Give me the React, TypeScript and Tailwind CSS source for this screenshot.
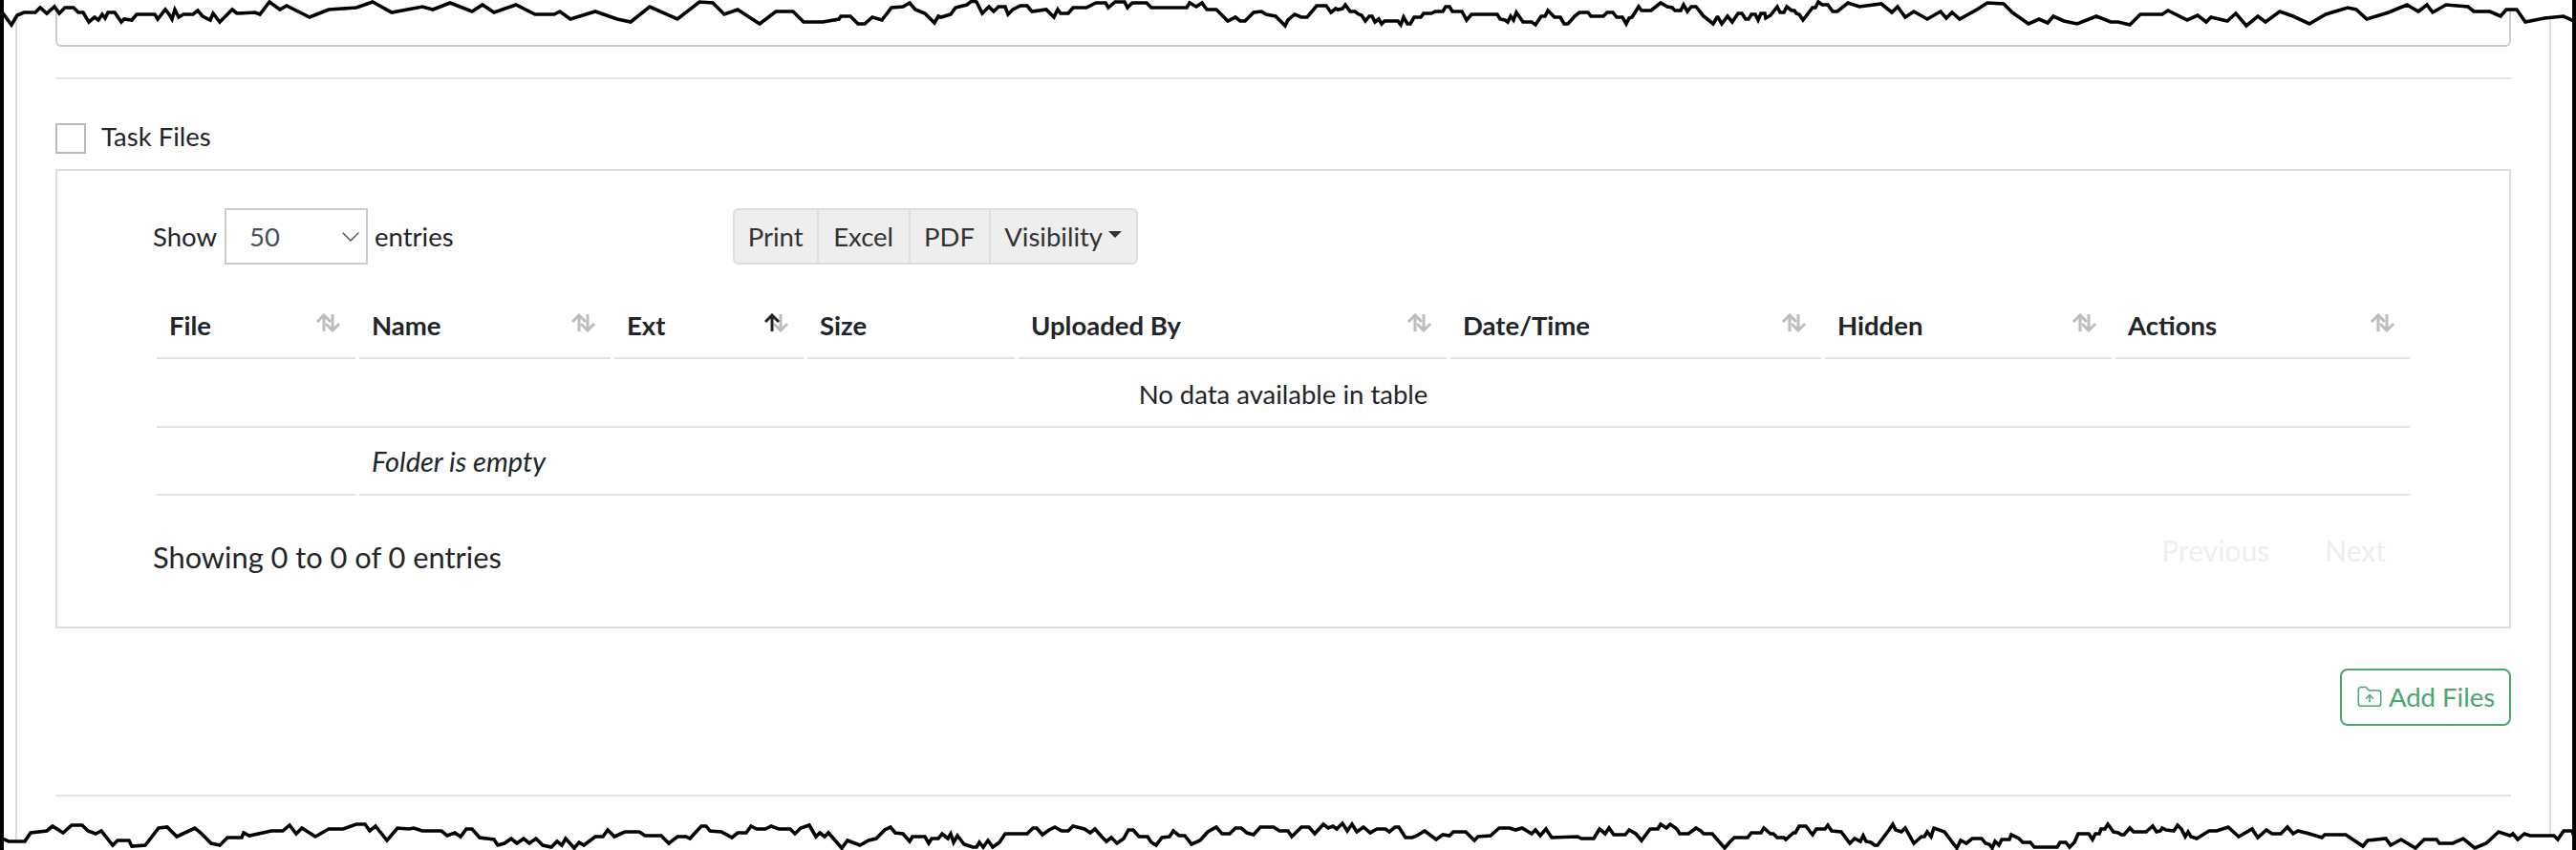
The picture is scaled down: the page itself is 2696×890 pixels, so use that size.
import { ChevronDown, FolderUp } from "lucide-react";

// torn edge of the screenshot, traced from the picture
const topEdge =
  "0,10 12,26 18,16 25,13 37,13 42,8 49,14 57,7 62,14 68,8 77,8 82,13 87,13 93,23 99,18 103,21 107,15 110,19 113,13 120,13 127,23 130,20 138,21 143,15 162,15 165,20 173,10 177,15 180,20 183,10 187,18 192,15 202,15 207,11 212,17 220,21 223,14 230,23 238,15 243,10 248,14 267,13 272,15 282,2 293,10 300,6 324,18 344,10 373,8 390,2 410,13 442,7 453,10 471,3 494,12 505,5 517,13 540,5 560,15 580,15 586,12 597,20 623,12 646,20 660,23 680,7 709,20 732,2 746,3 758,15 772,10 795,25 812,12 830,12 841,23 861,23 878,20 " +
  "880,17 890,17 898,25 905,25 913,18 923,21 933,8 945,7 952,3 958,10 968,14 978,24 982,17 985,18 995,15 1000,8 1012,5 1017,1 1022,2 1028,14 1035,7 1040,12 1045,7 1052,7 1055,15 1060,10 1068,6 1075,6 1080,12 1095,10 1103,18 1107,10 1110,14 1118,14 1123,8 1137,8 1147,3 1157,3 1160,8 1167,2 1177,2 1180,8 1185,3 1200,3 1205,8 1242,8 1245,3 1252,7 1258,3 1263,10 1273,10 1285,22 1293,18 1298,22 1303,22 1312,13 1320,12 1325,15 1335,17 1345,27 1348,21 1355,15 1362,18 1368,18 1378,6 1388,6 1393,13 1398,9 " +
  "1400,10 1405,9 1408,5 1413,12 1418,12 1422,15 1425,16 1429,22 1433,17 1436,17 1439,23 1443,20 1446,25 1449,22 1463,22 1466,26 1469,18 1473,25 1476,25 1480,18 1487,18 1490,14 1498,14 1502,12 1510,12 1513,7 1517,7 1520,12 1530,12 1535,21 1540,15 1567,15 1570,20 1575,21 1578,23 1581,17 1584,21 1587,13 1594,23 1603,23 1607,26 1613,17 1617,17 1620,11 1627,18 1633,18 1637,25 1641,25 1648,17 1653,13 1662,13 1665,17 1678,17 1682,13 1688,13 1692,18 1698,18 1702,25 1705,19 1708,18 1715,7 1718,11 1728,11 1738,3 1745,7 1750,8 1753,11 1759,11 1762,5 1766,12 1770,7 1775,7 1783,17 1793,25 1797,18 1798,18 1802,25 1808,17 1813,23 1819,14 1823,14 1827,20 1830,20 1833,15 1837,15 1840,21 1843,14 1847,14 1848,19 1853,16 1860,7 1863,13 1867,13 1870,7 1875,11 1878,11 1880,14 1883,15 1887,21 1897,8 1900,8 1903,2 1907,5 1913,5 1918,12 " +
  "1923,12 1934,3 1946,7 1969,4 1980,13 1986,7 1994,18 2003,12 2017,20 2031,12 2037,19 2043,13 2051,20 2069,10 2080,3 2097,4 2106,13 2123,25 2134,20 2143,24 2149,17 2160,22 2174,25 2194,17 2209,23 2217,23 2229,26 2240,15 2263,15 2269,11 2289,21 2300,16 2309,23 2314,18 2331,22 2340,14 2351,27 2363,17 2371,23 2386,12 2400,17 2417,25 2434,15 2457,8 2466,10 2477,20 2500,13 2519,5 2531,12 2540,5 2546,13 2560,5 2583,7 2589,12 2606,12 2617,17 2623,10 2634,10 2643,23 2663,19 2683,17 2696,23";

const bottomEdge =
  "0,877 9,881 26,881 32,872 49,870 55,865 66,872 75,864 86,864 92,870 100,873 106,870 118,885 123,880 135,880 138,886 152,885 166,867 175,866 185,876 204,867 210,872 221,883 230,885 238,877 253,877 255,872 261,875 284,870 296,870 303,864 310,873 316,867 330,876 344,868 359,868 373,863 382,863 387,870 393,865 405,880 416,867 428,868 433,867 442,870 462,870 468,875 476,872 482,876 488,868 494,868 502,877 517,879 521,885 528,883 535,878 541,883 548,878 554,883 561,878 568,885 577,887 583,881 588,885 592,878 601,888 606,882 611,885 623,876 631,876 636,869 643,876 654,871 669,871 675,875 692,875 700,883 709,876 718,876 722,878 734,865 739,865 743,870 755,871 766,877 772,872 781,872 786,865 792,868 801,868 807,865 815,868 827,868 832,873 838,867 847,864 854,876 858,872 863,876 867,872 881,888 887,880 " +
  "900,885 909,880 917,878 926,869 932,866 937,872 945,873 952,881 955,876 968,876 972,883 975,878 982,878 986,873 992,878 995,873 998,882 1002,875 1009,884 1018,887 1022,887 1025,882 1029,887 1034,880 1039,887 1046,882 1052,873 1075,873 1081,867 1085,867 1091,874 1098,869 1104,866 1111,870 1118,870 1123,865 1135,868 1141,872 1146,868 1153,876 1158,881 1163,877 1169,883 1176,878 1181,869 1186,869 1192,876 1201,876 1205,882 1210,885 1216,877 1224,876 1228,870 1234,875 1240,875 1247,884 1256,880 1264,871 1273,866 1279,873 1287,873 1293,867 1299,867 1305,872 1312,874 1319,866 1333,866 1339,870 1348,870 1352,876 1362,866 1370,866 1376,873 1385,863 1390,867 1395,865 1399,868 1405,862 1410,870 1415,863 1420,871 1427,866 1434,872 1441,868 1450,868 1454,871 1460,866 1464,866 1471,877 1478,877 1483,875 1491,870 1503,879 1510,874 1517,875 1521,871 1534,871 1543,880 1547,876 1560,875 1569,867 1580,867 1586,869 1593,867 1603,873 1607,869 1612,875 1618,868 1624,877 1651,876 1655,878 1668,878 1674,868 1680,873 1684,867 1689,874 1701,874 1705,869 1712,873 1718,880 1727,868 1735,868 1738,863 1744,867 1748,863 1755,868 1758,873 1767,873 1775,867 " +
  "1780,870 1783,873 1792,873 1805,888 1810,882 1815,877 1829,877 1833,872 1843,872 1846,867 1853,873 1856,873 1860,877 1867,877 1869,879 1877,872 1879,872 1883,865 1890,865 1897,874 1901,868 1910,868 1913,864 1917,870 1927,871 1936,883 1941,878 1947,881 1950,875 1953,881 1958,882 1962,885 1965,885 1977,869 1981,863 1984,869 1990,871 1994,867 2003,883 2011,876 2014,876 2017,871 2021,876 2024,867 2035,871 2048,888 2052,880 2058,883 2064,878 2074,878 2078,883 2082,884 2085,888 2088,881 2092,885 2095,879 2103,879 2105,874 2113,878 2117,882 2125,882 2129,887 2153,887 2156,882 2162,882 2166,887 2171,882 2175,873 2186,873 2190,879 2193,873 2197,873 2199,868 2203,868 2206,863 2212,871 2217,872 2220,874 2223,874 2229,867 2233,871 2246,871 2253,865 2257,871 2261,870 2263,867 2267,869 2275,870 2279,864 2283,868 2287,876 2290,871 2293,876 2299,878 " +
  "2312,870 2320,870 2332,866 2343,876 2357,868 2363,877 2372,869 2378,873 2387,873 2394,866 2400,873 2405,870 2417,873 2430,877 2433,874 2455,874 2473,886 2478,880 2497,878 2502,885 2513,879 2528,888 2537,879 2550,879 2553,883 2567,883 2578,878 2590,888 2602,883 2615,871 2627,875 2630,873 2635,879 2642,873 2648,875 2673,875 2677,879 2683,870 2692,870 2696,882";

const columns = [
  { label: "File", width: "w-[208px]" },
  { label: "Name", width: "w-[263px]" },
  { label: "Ext", width: "w-[198px]", active: true },
  { label: "Size", width: "w-[217px]", noSort: true },
  { label: "Uploaded By", width: "w-[448px]" },
  { label: "Date/Time", width: "w-[388px]" },
  { label: "Hidden", width: "w-[300px]" },
  { label: "Actions", width: "w-[308px]" },
];

function SortIcon({ active }: { active?: boolean }) {
  return (
    <svg width="26" height="20" viewBox="0 0 26 20" fill="none" strokeWidth="3" className="absolute right-[15px] top-[23px]">
      <path d="M17 1v17M10 11l7 7 7-7" stroke="#bdbdbd" />
      <path d="M8 19V2M1 9l7-7 7 7" stroke={active ? "#212529" : "#bdbdbd"} />
    </svg>
  );
}

function TornEdges() {
  return (
    <svg width="2696" height="890" viewBox="0 0 2696 890" className="absolute inset-0">
      <polygon points={`0,0 ${topEdge} 2696,0`} fill="#fff" />
      <polygon points={`0,890 ${bottomEdge} 2696,890`} fill="#fff" />
      <polyline points={topEdge} fill="none" stroke="#000" strokeWidth="3.6" />
      <polyline points={bottomEdge} fill="none" stroke="#000" strokeWidth="3.6" />
    </svg>
  );
}

export default function App() {
  return (
    <div className="relative h-[890px] w-[2696px] overflow-hidden border-l-[4px] border-r-[4px] border-black bg-white font-['Lato','Liberation_Sans',sans-serif] text-[27.5px] text-[#212529]">
      <div className="ml-[12px] h-full w-[2654px] border-x-2 border-[#dedede] px-[40px]">
        <div className="h-[49px] rounded-b-md border-x-2 border-b-2 border-[#cccccc]" />
        <div className="mt-[32px] h-[2px] bg-[#e4e4e4]" />

        <div className="mt-[46px] flex h-[31px] items-center gap-[16px]">
          <div className="h-[32px] w-[32px] border-2 border-[#b8bcc2]" />
          <span className="-mt-[4px]">Task Files</span>
        </div>

        <div className="mt-[17px] h-[481px] border-2 border-[#dedede] pl-[100px] pt-[39px]">
          <div className="flex h-[59px] items-center">
            <span>Show</span>
            <div className="ml-[8px] flex h-[59px] w-[150px] items-center justify-between border-2 border-[#cccccc] pl-[24px] text-[#495057]">
              50
              <ChevronDown size={32} strokeWidth={1} />
            </div>
            <span className="ml-[7px]">entries</span>
            <div className="ml-[292px] flex h-[59px] items-stretch rounded-md border-2 border-[#dddddd] bg-[#eeeeee] text-[#333333]">
              <div className="flex w-[88px] items-center justify-center border-r-2 border-[#dddddd]">Print</div>
              <div className="flex w-[96px] items-center justify-center border-r-2 border-[#dddddd]">Excel</div>
              <div className="flex w-[84px] items-center justify-center border-r-2 border-[#dddddd]">PDF</div>
              <div className="flex w-[152px] items-center justify-center gap-[6px]">
                Visibility
                <span className="mb-[4px] h-0 w-0 border-x-[7px] border-t-[7px] border-x-transparent border-t-[#333333]" />
              </div>
            </div>
          </div>

          <table className="mt-[28px] w-[2366px] table-fixed border-separate border-spacing-x-[4px] border-spacing-y-0">
            <thead>
              <tr>
                {columns.map((col) => (
                  <th key={col.label} className={`relative h-[71px] border-b-2 border-[#e2e2e2] pl-[13px] pt-[3px] text-left font-bold ${col.width}`}>
                    {col.label}
                    {!col.noSort && <SortIcon active={col.active} />}
                  </th>
                ))}
              </tr>
            </thead>
            <tbody>
              <tr>
                <td colSpan={8} className="h-[72px] border-b-2 border-[#e2e2e8] pt-[3px] text-center">
                  No data available in table
                </td>
              </tr>
              <tr>
                <td className="h-[71px] border-b-2 border-[#e2e2e8]" />
                <td colSpan={7} className="h-[71px] border-b-2 border-[#e2e2e8] pl-[13px] pt-[1px] text-[29px] italic">
                  Folder is empty
                </td>
              </tr>
            </tbody>
          </table>

          <div className="mt-[42px] flex items-start justify-between pr-[129px]">
            <span className="text-[30.8px]">Showing 0 to 0 of 0 entries</span>
            <div className="-mt-[7px] flex gap-[58px] text-[30px] text-[#eeeeee]">
              <span>Previous</span>
              <span>Next</span>
            </div>
          </div>
        </div>

        <div className="mt-[42px] flex justify-end">
          <div className="flex h-[60px] w-[179px] items-center justify-center gap-[6px] rounded-lg border-2 border-[#4aa56f] text-[#4aa56f]">
            <FolderUp size={28} strokeWidth={1.3} />
            Add Files
          </div>
        </div>

        <div className="mt-[72px] h-[2px] bg-[#e4e4e4]" />
      </div>
      <div className="absolute -left-[4px] top-0">
        <TornEdges />
      </div>
    </div>
  );
}
